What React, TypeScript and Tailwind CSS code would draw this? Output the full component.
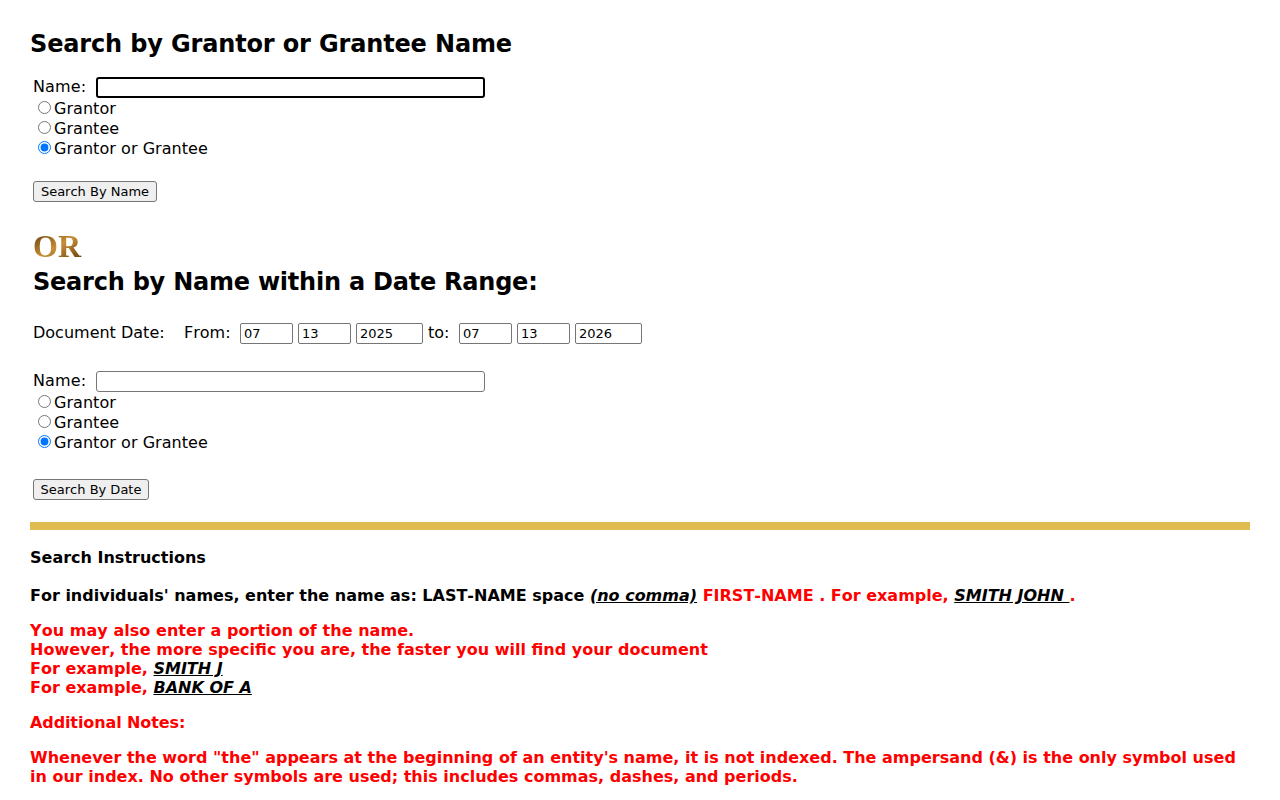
function NameField({ focused }: { focused?: boolean }) {
  return (
    <div className="flex h-[21px] items-center">
      <span className="-mt-[2px] w-[63px] tracking-[0.15px]">Name:</span>
      <input
        type="text"
        className={
          focused
            ? "h-[21px] w-[389px] rounded-[3px] border-2 border-black bg-white"
            : "h-[21px] w-[389px] rounded-[3px] border border-[#767676] bg-white"
        }
      />
    </div>
  );
}

function RadioGroup({ group }: { group: string }) {
  const options = ["Grantor", "Grantee", "Grantor or Grantee"];
  return (
    <div>
      {options.map((label) => (
        <label key={label} className="flex h-5 items-center tracking-[0.05px]">
          <input
            type="radio"
            name={group}
            defaultChecked={label === "Grantor or Grantee"}
            className="-mt-[2px] ml-[5px] mr-[3px] h-[13px] w-[13px]"
          />
          {label}
        </label>
      ))}
    </div>
  );
}

function FormButton({ label, width }: { label: string; width: string }) {
  return (
    <button
      className={`${width} h-[21px] rounded-[3px] border border-[#767676] bg-[#efefef] text-center text-[13px] leading-none text-black`}
    >
      {label}
    </button>
  );
}

function DateInput({ value, wide }: { value: string; wide?: boolean }) {
  return (
    <input
      type="text"
      defaultValue={value}
      className={
        wide
          ? "h-[21px] w-[67px] rounded-[2px] border border-[#767676] bg-white px-[3px] text-[13px] text-black"
          : "h-[21px] w-[53px] rounded-[2px] border border-[#767676] bg-white px-[3px] text-[13px] text-black"
      }
    />
  );
}

export default function App() {
  return (
    <div className="min-h-screen bg-white px-[30px] font-['DejaVu_Sans',sans-serif] text-base leading-[19px] text-black [font-kerning:none]">
      <h1 className="pt-[30px] text-2xl leading-[28px] font-bold tracking-[-0.15px]">
        Search by Grantor or Grantee Name
      </h1>

      <div className="pl-[3px]">
        <div className="mt-[19px]">
          <NameField focused />
        </div>
        <RadioGroup group="name-type" />
        <div className="mt-[23px]">
          <FormButton label="Search By Name" width="w-[124px]" />
        </div>

        <div className="mt-[29px] h-[30px] w-[50px] bg-gradient-to-br from-[#5e3a0c] via-[#c98f35] to-[#5e3a0c] bg-clip-text font-['Liberation_Serif',serif] text-[32px] leading-[30px] font-bold text-transparent blur-[0.3px]">
          OR
        </div>
        <h2 className="mt-[7px] text-2xl leading-[28px] font-bold tracking-[-0.23px]">
          Search by Name within a Date Range:
        </h2>

        <div className="mt-[27px] flex h-[21px] items-center">
          <span className="-mt-[2px] w-[151px]">Document Date:</span>
          <span className="-mt-[2px] w-[56px]">From:</span>
          <div className="flex items-center gap-[5px]">
            <DateInput value="07" />
            <DateInput value="13" />
            <DateInput value="2025" wide />
          </div>
          <span className="-mt-[2px] w-[36px] pl-[5px]">to:</span>
          <div className="flex items-center gap-[5px]">
            <DateInput value="07" />
            <DateInput value="13" />
            <DateInput value="2026" wide />
          </div>
        </div>

        <div className="mt-[27px]">
          <NameField />
        </div>
        <RadioGroup group="date-type" />
        <div className="mt-[27px]">
          <FormButton label="Search By Date" width="w-[116px]" />
        </div>
      </div>

      <div className="mt-[22px] h-2 bg-[#dfbb50]" />

      <div className="font-bold">
        <p className="mt-[18px]">Search Instructions</p>
        <p className="mt-[19px]">
          For individuals' names, enter the name as: LAST-NAME space <em className="underline">(no comma)</em>{" "}
          <span className="text-[#ff0000]">
            FIRST-NAME . For example, <em className="text-black underline">SMITH JOHN </em>.
          </span>
        </p>
        <div className="mt-[16px] text-[#ff0000]">
          <p className="tracking-[0.05px]">You may also enter a portion of the name.</p>
          <p>However, the more specific you are, the faster you will find your document</p>
          <p>
            For example, <em className="text-black underline">SMITH J</em>
          </p>
          <p>
            For example, <em className="text-black underline">BANK OF A</em>
          </p>
        </div>
        <p className="mt-[16px] tracking-[-0.1px] text-[#ff0000]">Additional Notes:</p>
        <p className="mt-[16px] text-[#ff0000]">
          Whenever the word "the" appears at the beginning of an entity's name, it is not indexed. The ampersand (&amp;)
          is the only symbol used in our index. No other symbols are used; this includes commas, dashes, and periods.
        </p>
      </div>
    </div>
  );
}
